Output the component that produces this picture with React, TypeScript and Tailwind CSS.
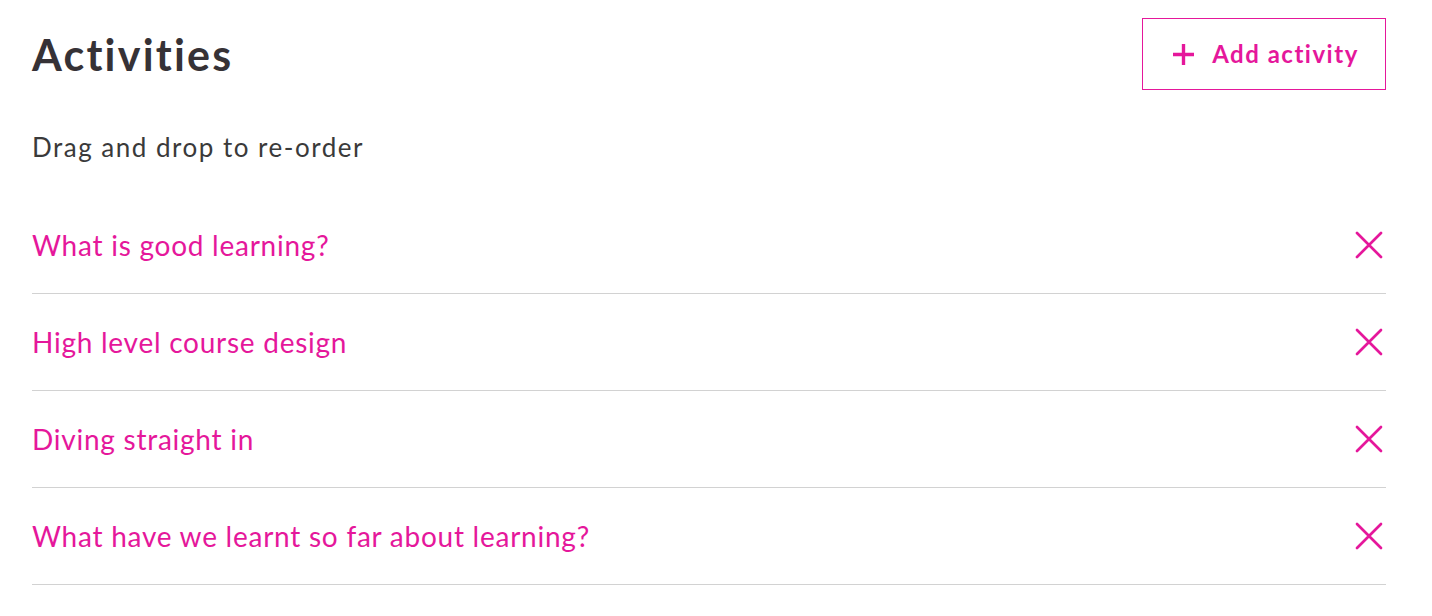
import React from 'react';

const items = [
  'What is good learning?',
  'High level course design',
  'Diving straight in',
  'What have we learnt so far about learning?',
];

const CloseIcon = () => (
  <svg width="28" height="28" viewBox="0 0 28 28" fill="none" stroke="currentColor" strokeWidth="2.7" strokeLinecap="round">
    <path d="M2 2L26 26M26 2L2 26" />
  </svg>
);

export default function App() {
  return (
    <div className="min-h-[616px] bg-white pl-8 pr-[46px] pt-[18px] font-['Lato',sans-serif]">
      {/* Header */}
      <div className="flex items-center justify-between">
        <h1 className="text-[43px] font-bold leading-none tracking-[2.2px] text-[#363236]">Activities</h1>
        <button className="flex h-[72px] w-[244px] items-center justify-center gap-[18px] border border-[#e5179b] pl-[4px] text-[#e5179b]">
          <svg width="21" height="21" viewBox="0 0 20 20" stroke="currentColor" strokeWidth="3.2">
            <path d="M10 0V20M0 10H20" />
          </svg>
          <span className="text-[24px] font-bold tracking-[1.5px]">Add activity</span>
        </button>
      </div>

      <p className="mt-[39px] text-[26px] leading-[36px] tracking-[1.5px] text-[#3a3a3a]">Drag and drop to re-order</p>

      {/* List */}
      <ul className="mt-[32px]">
        {items.map((item) => (
          <li
            key={item}
            className="flex h-[97px] items-center justify-between border-b border-[#d2d2d2]"
          >
            <span className="text-[28px] tracking-[0.75px] text-[#e5179b]">{item}</span>
            <button className="mr-[3px] text-[#e5179b]">
              <CloseIcon />
            </button>
          </li>
        ))}
      </ul>
    </div>
  );
}
